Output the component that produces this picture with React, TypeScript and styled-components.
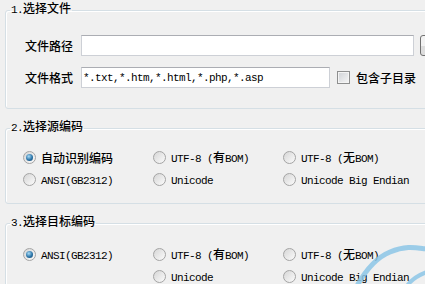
import React from "react";
import styled, { createGlobalStyle } from "styled-components";

const GlobalStyle = createGlobalStyle`
  html, body {
    margin: 0;
    padding: 0;
    background: #f0f0f0;
    overflow: hidden;
  }
  body {
    font-family: "Noto Sans CJK SC", "Noto Sans", sans-serif;
    line-height: 16px;
    color: #000;
  }
`;

const Page = styled.div`
  position: relative;
  width: 450px;
  height: 284px;
  padding: 0 5px;
  box-sizing: border-box;
  overflow: hidden;
`;

const Group = styled.fieldset`
  margin: 0 0 9px 0;
  padding: 0;
  border: 1px solid #d5dfe5;
  border-radius: 3px;
  box-shadow: inset 1px 1px 0 #fff;
  min-width: 0;
`;

const Legend = styled.legend`
  margin-left: 4px;
  padding: 0 1px 4px;
  height: 20px;
  box-sizing: border-box;
  line-height: 16px;
  font-size: 12px;
  white-space: nowrap;
`;

const Body = styled.div<{ $pt: number; $pb: number; $pl: number }>`
  padding: ${({ $pt, $pb, $pl }) => `${$pt}px 0 ${$pb}px ${$pl}px`};
`;

const Han = styled.span`
  font-family: "Noto Sans CJK SC", sans-serif;
  font-size: 12px;
  font-weight: 500;
  line-height: 16px;
  letter-spacing: 0;
`;

const Latin = styled.span`
  font-family: "Liberation Mono", monospace;
  font-size: 11px;
  line-height: 16px;
  letter-spacing: -0.6px;
`;

const mixed = (s: string) =>
  s
    .split(/([\u4e00-\u9fff]+)/)
    .filter(Boolean)
    .map((p, i) =>
      /[\u4e00-\u9fff]/.test(p) ? <Han key={i}>{p}</Han> : <Latin key={i}>{p}</Latin>
    );

const FileRows = styled.div`
  display: flex;
  flex-direction: column;
  gap: 11px;
`;

const FileRow = styled.div`
  display: flex;
  align-items: center;
  height: 21px;
`;

const RowLabel = styled(Han)`
  width: 48px;
  flex: none;
  margin-right: 8px;
  white-space: nowrap;
`;

const TextBox = styled.input<{ $w: number }>`
  width: ${({ $w }) => $w}px;
  flex: none;
  height: 21px;
  box-sizing: border-box;
  margin: 0;
  padding: 0 1px;
  border: 1px solid #cdd0d6;
  border-top-color: #abadb3;
  background: #fff;
  font-family: "Liberation Mono", monospace;
  font-size: 11px;
  letter-spacing: -0.6px;
  color: #000;
  outline: none;
`;

const Browse = styled.button`
  margin-left: 6px;
  width: 30px;
  height: 21px;
  flex: none;
  border: 1px solid #707070;
  border-radius: 3px;
  background: linear-gradient(#f2f2f2 50%, #dddddd 50%);
  padding: 0;
`;

const Check = styled.span`
  margin: 0 6px 0 7px;
  width: 13px;
  height: 13px;
  box-sizing: border-box;
  border: 1px solid #8e8f8f;
  background: linear-gradient(135deg, #cfd2d6, #f6f6f6);
  box-shadow: inset 0 0 0 1px #f4f4f4;
  flex: none;
`;

const Options = styled.div`
  display: grid;
  grid-template-columns: repeat(3, 130px);
  grid-auto-rows: 22px;
  align-items: center;
`;

const Option = styled.label<{ $col?: number }>`
  display: flex;
  align-items: center;
  gap: 5px;
  height: 22px;
  white-space: nowrap;
  grid-column: ${({ $col }) => ($col ? `${$col}` : "auto")};
`;

const Radio = styled.span<{ $on?: boolean }>`
  position: relative;
  width: 13px;
  height: 13px;
  box-sizing: border-box;
  border-radius: 50%;
  border: 1px solid #a4a4a4;
  background: linear-gradient(135deg, #d6d6d6, #fbfbfb);
  flex: none;

  &::after {
    content: "";
    display: ${({ $on }) => ($on ? "block" : "none")};
    position: absolute;
    left: 2px;
    top: 2px;
    width: 7px;
    height: 7px;
    border-radius: 50%;
    background: radial-gradient(circle at 40% 35%, #a9dcf8 0%, #2c75a8 55%, #123f66 100%);
  }
`;

const Watermark = styled.svg`
  position: absolute;
  left: 345px;
  top: 239px;
  pointer-events: none;
`;

type Opt = { text: string; on?: boolean; col?: number };

const source: Opt[] = [
  { text: "自动识别编码", on: true },
  { text: "UTF-8 (有BOM)" },
  { text: "UTF-8 (无BOM)" },
  { text: "ANSI(GB2312)" },
  { text: "Unicode" },
  { text: "Unicode Big Endian" },
];

const target: Opt[] = [
  { text: "ANSI(GB2312)", on: true },
  { text: "UTF-8 (有BOM)" },
  { text: "UTF-8 (无BOM)" },
  { text: "Unicode", col: 2 },
  { text: "Unicode Big Endian" },
];

const OptionGrid = ({ items }: { items: Opt[] }) => (
  <Options>
    {items.map((o) => (
      <Option key={o.text} $col={o.col}>
        <Radio $on={o.on} />
        <span>{mixed(o.text)}</span>
      </Option>
    ))}
  </Options>
);

export default function App() {
  return (
    <>
      <GlobalStyle />
      <Page>
        <Group>
          <Legend>{mixed("1.选择文件")}</Legend>
          <Body $pt={15} $pb={20} $pl={19}>
            <FileRows>
              <FileRow>
                <RowLabel>文件路径</RowLabel>
                <TextBox $w={333} readOnly defaultValue="" />
                <Browse aria-label="browse" />
              </FileRow>
              <FileRow>
                <RowLabel>文件格式</RowLabel>
                <TextBox $w={249} readOnly defaultValue="*.txt,*.htm,*.html,*.php,*.asp" />
                <Check />
                <Han>包含子目录</Han>
              </FileRow>
            </FileRows>
          </Body>
        </Group>

        <Group>
          <Legend>{mixed("2.选择源编码")}</Legend>
          <Body $pt={8} $pb={13} $pl={17}>
            <OptionGrid items={source} />
          </Body>
        </Group>

        <Group>
          <Legend>{mixed("3.选择目标编码")}</Legend>
          <Body $pt={10} $pb={13} $pl={17}>
            <OptionGrid items={target} />
          </Body>
        </Group>

        <Watermark width="80" height="45" viewBox="0 0 80 45">
          <path
            d="M12 47 C18 36, 28 20, 45 13 S 72 9, 82 10"
            fill="none"
            stroke="#8cc6e6"
            strokeWidth="5"
            strokeLinecap="round"
            opacity="0.85"
          />
          <path
            d="M62 47 Q 68 38, 82 33"
            fill="none"
            stroke="#8cc6e6"
            strokeWidth="4"
            strokeLinecap="round"
            opacity="0.85"
          />
        </Watermark>
      </Page>
    </>
  );
}
